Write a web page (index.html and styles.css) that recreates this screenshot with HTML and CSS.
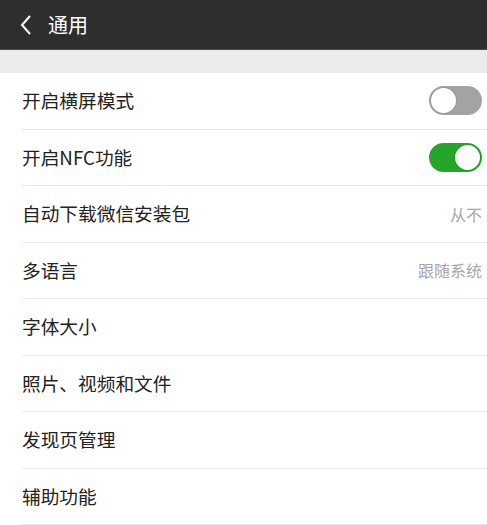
FILE: index.html
```html
<!DOCTYPE html>
<html lang="zh">
<head>
<meta charset="utf-8">
<link rel="stylesheet" href="styles.css">
</head>
<body>
<div class="header">
  <svg class="back" width="14" height="22" viewBox="0 0 14 22"><path d="M11 2 L3 11 L11 20" fill="none" stroke="#fff" stroke-width="2"/></svg>
  <span class="title">通用</span>
</div>
<div class="band"></div>
<ul class="list">
  <li class="row"><span class="label">开启横屏模式</span><span class="switch off"><span class="knob"></span></span></li>
  <li class="row"><span class="label">开启NFC功能</span><span class="switch on"><span class="knob"></span></span></li>
  <li class="row"><span class="label">自动下载微信安装包</span><span class="value">从不</span></li>
  <li class="row"><span class="label">多语言</span><span class="value">跟随系统</span></li>
  <li class="row"><span class="label">字体大小</span></li>
  <li class="row"><span class="label">照片、视频和文件</span></li>
  <li class="row"><span class="label">发现页管理</span></li>
  <li class="row"><span class="label">辅助功能</span></li>
</ul>
</body>
</html>
```
FILE: styles.css
```css
* { box-sizing: border-box; }
html, body { margin: 0; padding: 0; background: #fff; }
body { font-family: "Noto Sans CJK SC", "Noto Sans", sans-serif; color: #222; overflow: hidden; }
.header {
  height: 50px;
  background: #2e2e2e;
  display: flex;
  align-items: center;
  padding-left: 19px;
  border-bottom: 1px solid #4a4a4a;
}
.back { margin-right: 15px; }
.title { color: #fff; font-size: 20px; line-height: 1; }
.band { height: 23px; background: #ebebeb; }
.list { list-style: none; margin: 0; padding: 0 0 0 22px; }
.row {
  height: 56.5px;
  display: flex;
  align-items: center;
  justify-content: space-between;
  padding-right: 5px;
  border-bottom: 1px solid #e8e8e8;
}
.label { font-size: 18.7px; line-height: 1; color: #222; }
.value { font-size: 16px; color: #a6a6a6; }
.switch {
  width: 53px; height: 29px; border-radius: 15px;
  display: flex; align-items: center; padding: 2px;
}
.switch .knob { width: 25px; height: 25px; border-radius: 50%; background: #fff; }
.switch.off { background: #a3a3a3; justify-content: flex-start; }
.switch.off .knob { box-shadow: 0 0 0 1px #999; }
.switch.on { background: #26a52b; justify-content: flex-end; }
.switch.on .knob { box-shadow: 0 0 0 1px #1f9a24; }
```
